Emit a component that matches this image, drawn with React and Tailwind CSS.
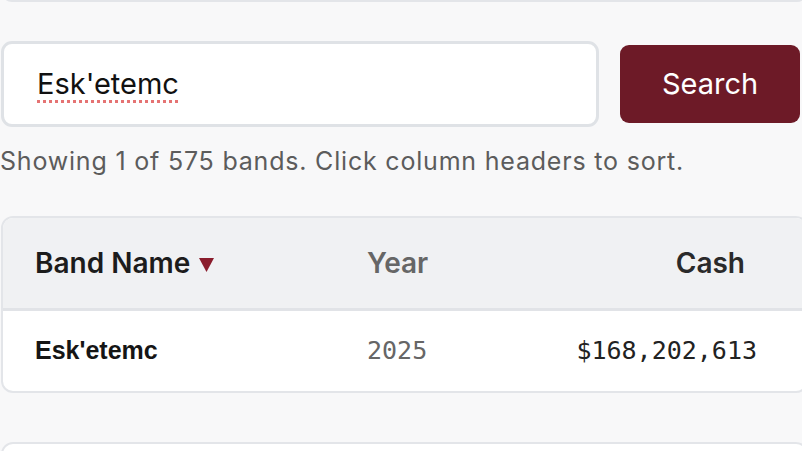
import React from 'react';

const sans = { fontFamily: 'Inter, "Noto Sans", sans-serif' };
const mono = { fontFamily: '"DejaVu Sans Mono", monospace' };

const SortArrow = () => (
  <svg width="15" height="14" viewBox="0 0 15 14" className="ml-[9px] mt-[4px]">
    <polygon points="0,0 15,0 7.5,14" fill="#8a1c2c" />
  </svg>
);

export default function App() {
  return (
    <div className="w-[802px] h-[451px] overflow-hidden bg-[#f8f8f9]" style={sans}>
      <div className="w-[808px] pl-[1px]">
        {/* card above, only its bottom edge shows */}
        <div className="-mt-[20px] h-[22px] bg-white border-2 border-[#e3e5e9] rounded-[12px]" />

        <div className="mt-[39px] flex items-center gap-[21px]">
          <div className="w-[598px] h-[86px] bg-white border-[3px] border-[#dfe2e6] rounded-[11px] flex items-center pl-[33px]">
            <span className="text-[29px] text-[#111] underline decoration-dotted decoration-[#e57373] decoration-[3px] underline-offset-[6px]">
              Esk'etemc
            </span>
          </div>
          <button className="w-[180px] h-[78px] bg-[#6d1a27] text-white text-[29px] rounded-[9px]">
            Search
          </button>
        </div>

        <p className="mt-[19px] -ml-[1px] text-[25px] leading-[30px] tracking-[0.8px] text-[#5c5c5c]">
          Showing 1 of 575 bands. Click column headers to sort.
        </p>

        <div className="mt-[40px] bg-white border-2 border-[#e3e5e9] rounded-[12px] overflow-hidden">
          <div className="h-[93px] bg-[#f0f1f3] border-b-[3px] border-[#e1e3e7] flex items-center text-[28px] font-semibold">
            <div className="w-[364px] pl-[32px] flex items-center text-[#1c1c1c]">
              Band Name
              <SortArrow />
            </div>
            <div className="w-[200px] text-[#666]">Year</div>
            <div className="w-[190px] text-right pr-[12px] text-[#2a2a2a]">Cash</div>
          </div>
          <div className="h-[80px] flex items-center">
            <div
              className="w-[364px] pl-[32px] text-[25px] font-bold text-[#151515]"
              style={{ fontFamily: '"Liberation Sans", Arial, sans-serif' }}
            >
              Esk'etemc
            </div>
            <div className="w-[200px] text-[25px] text-[#666]" style={mono}>
              2025
            </div>
            <div className="w-[190px] text-right -mr-[12px] text-[25px] text-[#222]" style={mono}>
              $168,202,613
            </div>
          </div>
        </div>

        <div className="mt-[49px] h-[60px] bg-white border-2 border-[#e3e5e9] rounded-[12px]" />
      </div>
    </div>
  );
}
